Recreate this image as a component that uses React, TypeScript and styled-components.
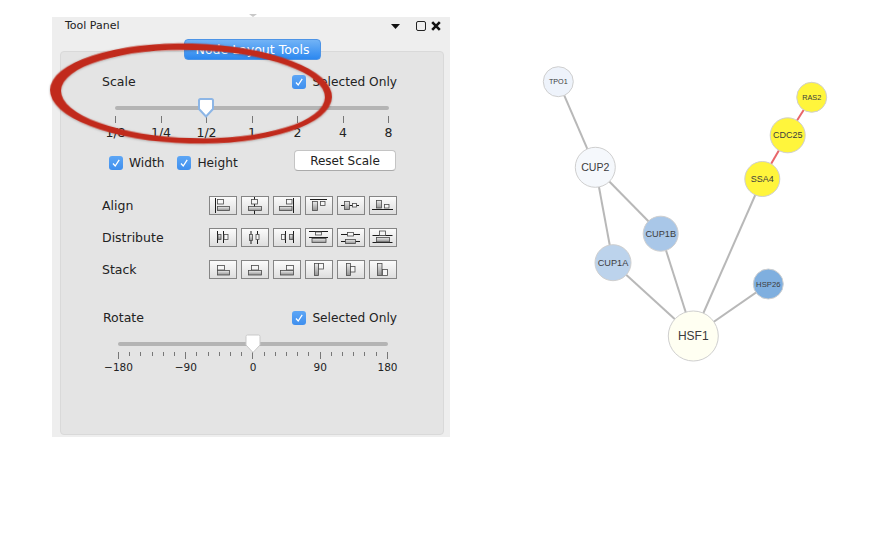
import React from "react";
import styled, { createGlobalStyle } from "styled-components";

const Global = createGlobalStyle`
  html, body { margin: 0; padding: 0; background: #fff; }
  body { font-family: "DejaVu Sans", "Liberation Sans", sans-serif; color: #222; }
`;

const Page = styled.div`
  position: relative;
  display: flex;
  align-items: flex-start;
  width: 883px;
  height: 541px;
  padding-left: 52px;
  box-sizing: border-box;
  overflow: hidden;
`;
const TopNub = styled.div`
  position: absolute;
  left: 249px;
  top: 14px;
  width: 0;
  height: 0;
  border-left: 4px solid transparent;
  border-right: 4px solid transparent;
  border-top: 3px solid #c8c8c8;
`;
const Panel = styled.section`
  width: 398px;
  height: 420px;
  margin-top: 17px;
  background: #eeeeee;
  display: flex;
  flex-direction: column;
  padding: 0 6px 2px 8px;
  box-sizing: border-box;
`;
const PanelHeader = styled.header`
  height: 17px;
  display: flex;
  align-items: center;
  padding: 0 3px 0 5px;
  flex-shrink: 0;
`;
const PanelTitle = styled.span`
  font-size: 11px;
  color: #222;
  margin-right: auto;
`;
const HeaderIcons = styled.div`
  display: flex;
  align-items: center;
  gap: 5px;
`;
const Inner = styled.div`
  margin-top: 17px;
  flex: 1;
  background: #e4e4e4;
  border: 1px solid #d9d9d9;
  border-radius: 4px;
  display: flex;
  flex-direction: column;
  box-sizing: border-box;
`;
const TitleButton = styled.button`
  align-self: center;
  width: 137px;
  height: 21px;
  margin-top: -13px;
  margin-left: 1px;
  padding: 0;
  border: 1px solid #4d94e6;
  border-radius: 4px;
  background: linear-gradient(#72b3f6, #2c88f0);
  color: #fff;
  font: 12.5px "DejaVu Sans", sans-serif;
  flex-shrink: 0;
`;
const HeadRow = styled.div<{ $top: number; $left: number }>`
  display: flex;
  align-items: center;
  justify-content: space-between;
  height: 16px;
  margin: ${(p) => p.$top}px 46px 0 ${(p) => p.$left}px;
  flex-shrink: 0;
`;
const RowLabel = styled.span`
  font-size: 12.5px;
  color: #222;
`;
const HeadLabel = styled(RowLabel)`
  padding-bottom: 2px;
`;
const Check = styled.label`
  display: inline-flex;
  align-items: center;
  gap: 6px;
  font-size: 12.2px;
  color: #222;
`;
const CheckBox = styled.span`
  width: 14px;
  height: 14px;
  border-radius: 3px;
  background: linear-gradient(#5da6f5, #3f8fee);
  display: inline-flex;
  align-items: center;
  justify-content: center;
`;
const SliderWrap = styled.div<{ $left: number; $width: number; $top: number }>`
  position: relative;
  width: ${(p) => p.$width}px;
  margin: ${(p) => p.$top}px 0 0 ${(p) => p.$left}px;
  flex-shrink: 0;
`;
const Track = styled.div`
  height: 4px;
  border-radius: 2px;
  background: #b4b4b4;
`;
const Thumb = styled.svg`
  position: absolute;
  top: -8px;
  transform: translateX(-50%);
`;
const Ticks = styled.div`
  display: flex;
  justify-content: space-between;
  margin-top: 6px;
  height: 7px;
  align-items: flex-start;
`;
const Tick = styled.span<{ $major: boolean }>`
  width: 1px;
  height: ${(p) => (p.$major ? 7 : 4)}px;
  background: #777;
`;
const TickLabels = styled.div<{ $size: number; $gap: number }>`
  display: flex;
  justify-content: space-between;
  margin-top: ${(p) => p.$gap}px;
  font-size: ${(p) => p.$size}px;
  color: #222;
`;
const TickLabel = styled.span`
  width: 1px;
  display: flex;
  justify-content: center;
  white-space: nowrap;
`;
const OptionsRow = styled.div`
  display: flex;
  align-items: center;
  height: 21px;
  margin: 10px 47px 0 48px;
  flex-shrink: 0;
`;
const OptionsChecks = styled.div`
  display: flex;
  gap: 13px;
  margin-top: 4px;
  margin-right: auto;
`;
const ResetButton = styled.button`
  width: 102px;
  height: 21px;
  padding: 0;
  background: #fff;
  border: 1px solid #c4c4c4;
  border-bottom-color: #aaa;
  border-radius: 4px;
  font: 12px "DejaVu Sans", sans-serif;
  color: #222;
`;
const ToolGrid = styled.div`
  display: flex;
  flex-direction: column;
  gap: 13px;
  margin: 25px 46px 0 41px;
  flex-shrink: 0;
`;
const ToolRow = styled.div`
  display: flex;
  align-items: center;
  justify-content: space-between;
`;
const ToolButtons = styled.div`
  display: flex;
  gap: 4px;
`;
const ToolButton = styled.button`
  width: 28px;
  height: 19px;
  padding: 0;
  border: 1px solid #858585;
  background: linear-gradient(#fbfbfb, #dedede);
  display: block;
`;
const ToolSvg = styled.svg`
  display: block;
`;
const Graph = styled.svg`
  display: block;
  flex-shrink: 0;
`;
const Annotation = styled.svg`
  position: absolute;
  left: 0;
  top: 0;
  pointer-events: none;
`;
const MenuCaret = styled.svg`
  margin: 1px 11px 0 0;
`;

type R = [number, number, number, number, 0 | 1];
type L = [number, number, number, number];
type IconDef = { l: L[]; r: R[] };

const rows: { label: string; icons: IconDef[] }[] = [
  {
    label: "Align",
    icons: [
      { l: [[6.5, 2, 6.5, 17]], r: [[8.5, 3.5, 6, 4.5, 0], [8.5, 10.5, 12, 4, 1]] },
      { l: [[13.5, 1, 13.5, 18]], r: [[10.5, 3.5, 6, 4.5, 0], [7.5, 10.5, 13, 4, 1]] },
      { l: [[20.5, 2, 20.5, 17]], r: [[13.5, 3.5, 5.5, 4.5, 0], [6.5, 10.5, 12.5, 4, 1]] },
      { l: [[5, 3.5, 22, 3.5]], r: [[7.5, 5.5, 5, 9, 1], [15.5, 5.5, 4.5, 4, 0]] },
      { l: [[4, 9.5, 22, 9.5]], r: [[7.5, 5.5, 5, 8, 1], [15.5, 7.5, 4, 3.5, 0]] },
      { l: [[3, 13.5, 24, 13.5]], r: [[7.5, 4.5, 5, 7.5, 1], [15.5, 8.5, 4.5, 3.5, 0]] },
    ],
  },
  {
    label: "Distribute",
    icons: [
      { l: [[8.5, 3, 8.5, 15], [14.5, 3, 14.5, 15]], r: [[9, 6.5, 3, 5, 1], [15, 6.5, 4, 5, 0]] },
      { l: [[10, 3, 10, 16], [16.5, 3, 16.5, 16]], r: [[8.5, 6.5, 3, 6, 1], [15, 6.5, 3, 5, 0]] },
      { l: [[12.5, 3, 12.5, 15], [20.5, 3, 20.5, 15]], r: [[8.5, 6.5, 3.5, 5, 0], [16.5, 6.5, 3.5, 5, 1]] },
      { l: [[4, 3.5, 23, 3.5], [4, 9.5, 23, 9.5]], r: [[10.5, 4, 6, 3, 0], [7, 10.5, 14, 4, 1]] },
      { l: [[4, 6.5, 23, 6.5], [4, 13.5, 23, 13.5]], r: [[10.5, 4.5, 6, 3.5, 0], [8.5, 11.5, 10, 4, 1]] },
      { l: [[3.5, 7.5, 23.5, 7.5], [3.5, 14.5, 23.5, 14.5]], r: [[10.5, 3, 6, 4.5, 0], [7.5, 9.5, 13, 4.5, 1]] },
    ],
  },
  {
    label: "Stack",
    icons: [
      { l: [], r: [[8.5, 5.5, 7, 4.5, 0], [8.5, 10.5, 12, 4.5, 1]] },
      { l: [], r: [[10.5, 5.5, 7, 4.5, 0], [7.5, 10.5, 13, 4.5, 1]] },
      { l: [], r: [[13.5, 5.5, 7, 4.5, 0], [7.5, 10.5, 13, 4.5, 1]] },
      { l: [], r: [[9.5, 3.5, 4, 12, 1], [13.5, 3.5, 5, 5.5, 0]] },
      { l: [], r: [[9.5, 3.5, 4, 12, 1], [13.5, 6.5, 4.5, 5.5, 0]] },
      { l: [], r: [[8.5, 3.5, 4.5, 12, 1], [13.5, 9.5, 5, 6, 0]] },
    ],
  },
];

const ToolIcon = ({ d, id }: { d: IconDef; id: string }) => (
  <ToolSvg width="26" height="17" viewBox="1 1 26 17" aria-hidden="true">
    <defs>
      <linearGradient id={id} x1="0" x2="0" y1="0" y2="1">
        <stop offset="0" stopColor="#ececec" />
        <stop offset="1" stopColor="#929292" />
      </linearGradient>
    </defs>
    {d.l.map(([a, b, c, e], i) => (
      <line key={i} x1={a} y1={b} x2={c} y2={e} stroke="#1c1c1c" strokeWidth="1" />
    ))}
    {d.r.map(([x, y, w, h, k], i) => (
      <rect
        key={i}
        x={x}
        y={y}
        width={w}
        height={h}
        fill={k ? `url(#${id})` : "#f6f6f6"}
        stroke="#4a4a4a"
        strokeWidth="0.8"
      />
    ))}
  </ToolSvg>
);

const Checked = ({ children }: { children: React.ReactNode }) => (
  <Check>
    <CheckBox>
      <svg width="10" height="10" viewBox="0 0 10 10" fill="none">
        <path d="M2 5.5 L4.2 8 L8.2 1.8" stroke="#fff" strokeWidth="1.3" />
      </svg>
    </CheckBox>
    {children}
  </Check>
);

const Slider = ({
  left, width, top, pos, blue, ticks, majorEvery, labels, size, gap,
}: {
  left: number; width: number; top: number; pos: number; blue: boolean; ticks: number;
  majorEvery: number; labels: string[]; size: number; gap: number;
}) => (
  <SliderWrap $left={left} $width={width} $top={top}>
    <Track />
    <Thumb width="19" height="21" viewBox="0 0 19 21" style={{ left: `${pos * 100}%` }}>
      <path
        d="M2.5 2.5 Q2.5 1 4 1 H15 Q16.5 1 16.5 2.5 V11 L9.5 18.5 L2.5 11 Z"
        fill="#fff"
        stroke={blue ? "#8db6e6" : "#c9c9c9"}
        strokeWidth={blue ? 2 : 1}
      />
    </Thumb>
    <Ticks>
      {Array.from({ length: ticks }, (_, i) => (
        <Tick key={i} $major={i % majorEvery === 0} />
      ))}
    </Ticks>
    <TickLabels $size={size} $gap={gap}>
      {labels.map((t) => (
        <TickLabel key={t}>{t}</TickLabel>
      ))}
    </TickLabels>
  </SliderWrap>
);

const nodes = [
  { n: "TPO1", x: 558.3, y: 81.7, r: 15, c: "#eef3fb", f: 7.2 },
  { n: "CUP2", x: 595.3, y: 167.3, r: 20, c: "#f5f8fc", f: 10.6 },
  { n: "RAS2", x: 811.7, y: 97.3, r: 15, c: "#fff53c", f: 7.3 },
  { n: "CDC25", x: 787.7, y: 135.3, r: 17.5, c: "#fff53c", f: 9 },
  { n: "SSA4", x: 762.3, y: 179, r: 17.5, c: "#fff53c", f: 9 },
  { n: "CUP1B", x: 660.7, y: 233.7, r: 17.5, c: "#a9c7e8", f: 9.2 },
  { n: "CUP1A", x: 613, y: 262.7, r: 18, c: "#bcd3ec", f: 9.2 },
  { n: "HSP26", x: 768.3, y: 284, r: 15, c: "#7fafdf", f: 7.7 },
  { n: "HSF1", x: 693.3, y: 336, r: 25, c: "#fffff2", f: 12 },
];
const edges: [string, string, string][] = [
  ["TPO1", "CUP2", "#b8b8b8"],
  ["CUP2", "CUP1A", "#b8b8b8"],
  ["CUP2", "CUP1B", "#b8b8b8"],
  ["CUP1B", "HSF1", "#b8b8b8"],
  ["CUP1A", "HSF1", "#b8b8b8"],
  ["SSA4", "HSF1", "#b8b8b8"],
  ["HSP26", "HSF1", "#b8b8b8"],
  ["RAS2", "CDC25", "#e8666a"],
  ["CDC25", "SSA4", "#e8666a"],
];
const at = (n: string) => nodes.find((k) => k.n === n)!;

export default function App() {
  return (
    <Page>
      <Global />
      <TopNub />
      <Panel>
        <PanelHeader>
          <PanelTitle>Tool Panel</PanelTitle>
          <HeaderIcons>
            <MenuCaret width="9" height="5" viewBox="0 0 9 5">
              <path d="M0 0 H9 L4.5 5 Z" fill="#111" />
            </MenuCaret>
            <svg width="10" height="10" viewBox="0 0 10 10">
              <rect x="0.5" y="0.5" width="9" height="9" rx="1.5" fill="none" stroke="#222" />
            </svg>
            <svg width="10" height="10" viewBox="0 0 10 10">
              <path d="M1.2 1.2 L8.8 8.8 M8.8 1.2 L1.2 8.8" stroke="#111" strokeWidth="2.6" />
            </svg>
          </HeaderIcons>
        </PanelHeader>
        <Inner>
          <TitleButton>Node Layout Tools</TitleButton>
          <HeadRow $top={14} $left={41}>
            <HeadLabel>Scale</HeadLabel>
            <Checked>Selected Only</Checked>
          </HeadRow>
          <Slider
            left={54}
            width={274}
            top={16}
            pos={1 / 3}
            blue
            ticks={7}
            majorEvery={1}
            labels={["1/8", "1/4", "1/2", "1", "2", "4", "8"]}
            size={12.5}
            gap={2}
          />
          <OptionsRow>
            <OptionsChecks>
              <Checked>Width</Checked>
              <Checked>Height</Checked>
            </OptionsChecks>
            <ResetButton>Reset Scale</ResetButton>
          </OptionsRow>
          <ToolGrid>
            {rows.map((row, ri) => (
              <ToolRow key={row.label}>
                <RowLabel>{row.label}</RowLabel>
                <ToolButtons>
                  {row.icons.map((d, i) => (
                    <ToolButton key={i}>
                      <ToolIcon d={d} id={`g${ri}${i}`} />
                    </ToolButton>
                  ))}
                </ToolButtons>
              </ToolRow>
            ))}
          </ToolGrid>
          <HeadRow $top={31} $left={42}>
            <HeadLabel>Rotate</HeadLabel>
            <Checked>Selected Only</Checked>
          </HeadRow>
          <Slider
            left={57}
            width={270}
            top={16}
            pos={0.5}
            blue={false}
            ticks={25}
            majorEvery={6}
            labels={["−180", "−90", "0", "90", "180"]}
            size={10.5}
            gap={2}
          />
        </Inner>
      </Panel>
      <Graph width="433" height="541" viewBox="450 0 433 541">
        {edges.map(([a, b, c]) => (
          <line key={a + b} x1={at(a).x} y1={at(a).y} x2={at(b).x} y2={at(b).y} stroke={c} strokeWidth="2" />
        ))}
        {nodes.map((k) => (
          <g key={k.n}>
            <circle cx={k.x} cy={k.y} r={k.r} fill={k.c} stroke="#cfcfcf" strokeWidth="1" />
            <text
              x={k.x}
              y={k.y}
              dy="0.35em"
              textAnchor="middle"
              fontFamily="'Liberation Sans', sans-serif"
              fontSize={k.f}
              fill="#3c3c3c"
            >
              {k.n}
            </text>
          </g>
        ))}
      </Graph>
      <Annotation width="883" height="541" viewBox="0 0 883 541">
        <defs>
          <filter id="soft" x="-5%" y="-10%" width="110%" height="120%">
            <feDropShadow dx="0" dy="0.5" stdDeviation="1" floodColor="#000" floodOpacity="0.3" />
          </filter>
        </defs>
        <path
          transform="rotate(1.5 191 93.5)"
          fillRule="evenodd"
          fill="#c12b1d"
          filter="url(#soft)"
          d="M50 93.5 a141 50 0 1 0 282 0 a141 50 0 1 0 -282 0 Z M61 94 a132 44 0 1 0 264 0 a132 44 0 1 0 -264 0 Z"
        />
      </Annotation>
    </Page>
  );
}
